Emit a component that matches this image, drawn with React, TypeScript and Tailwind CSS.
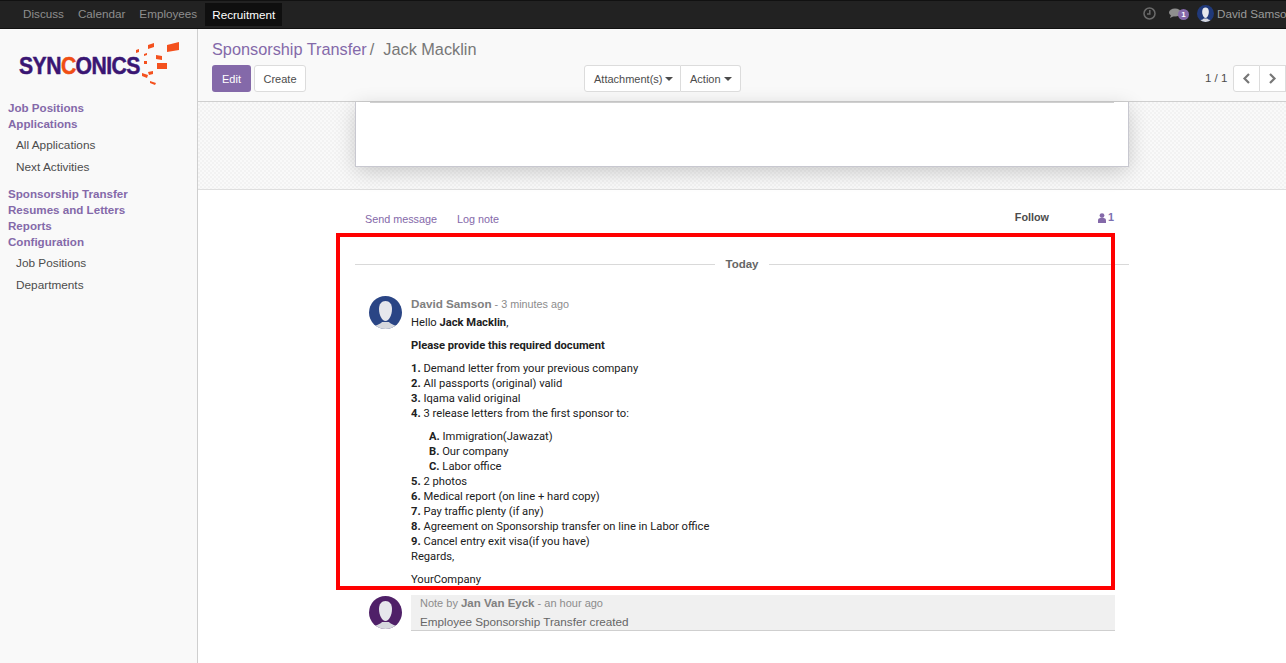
const SANS = "font-['Liberation_Sans',Arial,sans-serif]";
const BODY = "font-['Roboto','Noto_Sans',sans-serif]";

function Avatar({ color, size = 33 }: { color: string; size?: number }) {
  return (
    <svg width={size} height={size} viewBox="0 0 33 33" className="shrink-0">
      <defs>
        <clipPath id={`clip-${color}`}>
          <circle cx="16.5" cy="16.5" r="16.5" />
        </clipPath>
      </defs>
      <g clipPath={`url(#clip-${color})`}>
        <rect width="33" height="33" fill={color} />
        <path d="M3 33c1-4 8-4 10-7h7c2 3 9 3 10 7z" fill="#d6d8de" />
        <path d="M16.5 5c4 0 6.5 3 6.5 8 0 6-3 12-6.5 12S10 19 10 13c0-5 2.500-8 6.500-8z" fill="#e6e7ec" />
      </g>
    </svg>
  );
}

function Caret() {
  return <span className="ml-[3px] inline-block border-x-[4px] border-t-[4px] border-x-transparent border-t-[#4c4c4c] align-middle" />;
}

function Logo() {
  return (
    <div className="relative h-[60px] w-[197px]">
      <div className="absolute left-[19px] top-[23px] origin-left scale-x-[0.9] text-[23.5px] font-bold leading-[28px] tracking-[-0.6px] text-[#3a1673] [-webkit-text-stroke:0.5px_#3a1673] font-['Liberation_Sans',sans-serif]">
        SYN<span className="text-[#f04e14] [-webkit-text-stroke:0.5px_#f04e14]">C</span>ONICS
      </div>
      <svg className="absolute left-[135px] top-[12px]" width="46" height="46" viewBox="0 0 46 46" fill="#f4511e">
        <path d="M32 4l12-3v8l-12 2zM13 4l6-2v4l-6 2zM1 9l3-1v3l-3 1zM9 13l3-1v2l-3 1zM21 14l6 1v4l-6-1zM22 22h10v6h-10zM9 20h3v3h-3zM13 31l5-1 0 3-4 1zM7 32l6 2-1 3-5-2zM15 40l6 2-1 2-5-2z" />
      </svg>
    </div>
  );
}

const navItems = ["Discuss", "Calendar", "Employees"];

const docs = [
  "Demand letter from your previous company",
  "All passports (original) valid",
  "Iqama valid original",
  "3 release letters from the first sponsor to:",
];
const subDocs = [
  ["A.", "Immigration(Jawazat)"],
  ["B.", "Our company"],
  ["C.", "Labor office"],
];
const docs2 = [
  "2 photos",
  "Medical report (on line + hard copy)",
  "Pay traffic plenty (if any)",
  "Agreement on Sponsorship transfer on line in Labor office",
  "Cancel entry exit visa(if you have)",
];

function SideHead({ children }: { children: string }) {
  return <div className="h-4 pl-2 text-[11.6px] font-bold leading-4 text-[#8469a9]">{children}</div>;
}

function SideItem({ children }: { children: string }) {
  return <div className="h-[22px] pl-4 text-[11.8px] leading-[22px] text-[#4c4c4c]">{children}</div>;
}

export default function App() {
  return (
    <div className={`relative flex h-[663px] w-[1286px] flex-col overflow-hidden bg-white ${SANS}`}>
      {/* top bar */}
      <div className="flex h-[29px] shrink-0 items-center justify-between border-y border-y-[#111] bg-[#222222] pb-px text-[11.7px]">
        <div className="flex items-center pl-[16px]">
          {navItems.map((n) => (
            <span key={n} className="px-[7px] text-[#8e8e8e]">{n}</span>
          ))}
          <span className="ml-px h-[23px] bg-[#0f0f0f] px-[7px] leading-[23px] text-white">Recruitment</span>
        </div>
        <div className="flex w-[143px] shrink-0 items-center overflow-hidden whitespace-nowrap text-[#9a9a9a]">
          <svg width="13" height="13" viewBox="0 0 13 13" fill="none" stroke="#6b6b6b" strokeWidth="1.5" className="shrink-0">
            <circle cx="6.5" cy="6.5" r="5.5" />
            <path d="M6.8 3v4H4" />
          </svg>
          <span className="relative ml-[13px] h-3 w-5 shrink-0">
            <svg width="14" height="11" viewBox="0 0 14 11" fill="#8e8e8e" className="absolute left-0 top-0">
              <ellipse cx="6" cy="4.5" rx="6" ry="4" />
              <path d="M2 7l-1 3 4-2zM9 7h4l-1 3z" />
            </svg>
            <span className="absolute left-[9px] top-[1px] h-[11px] w-[11px] rounded-full bg-[#8469a9] text-center text-[8px] font-bold leading-[11px] text-white">1</span>
          </span>
          <span className="ml-[8px] shrink-0"><Avatar color="#20397a" size={17} /></span>
          <span className="ml-[3px] text-[11.7px]">David Samson</span>
        </div>
      </div>

      <div className="flex min-h-0 flex-1">
        {/* sidebar */}
        <div className="w-[198px] shrink-0 border-r border-r-[#cfcfcf] bg-[#f9f9f9]">
          <Logo />
          <div className="pt-[11px]">
            <SideHead>Job Positions</SideHead>
            <SideHead>Applications</SideHead>
            <div className="mt-[2px]">
              <SideItem>All Applications</SideItem>
              <SideItem>Next Activities</SideItem>
            </div>
            <div className="mt-[8px]">
              <SideHead>Sponsorship Transfer</SideHead>
              <SideHead>Resumes and Letters</SideHead>
              <SideHead>Reports</SideHead>
              <SideHead>Configuration</SideHead>
            </div>
            <div className="mt-[2px]">
              <SideItem>Job Positions</SideItem>
              <SideItem>Departments</SideItem>
            </div>
          </div>
        </div>

        <div className="min-w-0 flex-1">
          {/* control panel */}
          <div className="h-[73px] border-b border-b-[#cfcfcf] bg-[#f9f9f9] pl-[14px]">
            <div className="flex h-[36px] items-center pt-[3px] text-[16.3px] leading-5">
              <span className="text-[#8469a9]">Sponsorship Transfer</span>
              <span className="ml-[3px] text-[#777777]">/</span>
              <span className="ml-[9px] text-[#777777]">Jack Macklin</span>
            </div>
            <div className="flex items-center text-[11px]">
              <div className="flex h-[27px] w-[39px] items-center justify-center rounded-[3px] bg-[#8469a9] pt-px text-white">Edit</div>
              <div className="ml-[3px] flex h-[27px] w-[52px] items-center justify-center rounded-[3px] border border-[#dcdcdc] bg-white pt-px text-[#4c4c4c]">Create</div>
              <div className="ml-[278px] flex h-[27px] w-[97px] items-center rounded-l-[3px] border border-[#dcdcdc] bg-white pl-[9px] pt-px text-[#4c4c4c]">Attachment(s)<Caret /></div>
              <div className="flex h-[27px] w-[60px] items-center rounded-r-[3px] border border-l-0 border-[#dcdcdc] bg-white pl-[9px] pt-px text-[#4c4c4c]">Action<Caret /></div>
              <div className="ml-[464px] w-[28px] whitespace-nowrap pt-px text-[11.5px] text-[#4c4c4c]">1 / 1</div>
              <div className="flex h-[27px] w-[27px] items-center justify-center rounded-l-[3px] border border-[#dcdcdc] bg-white">
                <svg width="9" height="11" viewBox="0 0 9 11" fill="none" stroke="#777" strokeWidth="2.2"><path d="M7 1L2.500 5.500 7 10" /></svg>
              </div>
              <div className="flex h-[27px] w-[26px] items-center justify-center border-y border-r border-[#dcdcdc] bg-white">
                <svg width="9" height="11" viewBox="0 0 9 11" fill="none" stroke="#777" strokeWidth="2.2"><path d="M2 1l4.500 4.500L2 10" /></svg>
              </div>
            </div>
          </div>

          {/* form sheet area */}
          <div className="h-[88px] border-b border-b-[#dedede] bg-[#f6f6f6] bg-[conic-gradient(#f2f2f2_25%,#f9f9f9_0_50%,#f2f2f2_0_75%,#f9f9f9_0)] bg-[length:4px_4px] pl-[157px]">
            <div className="h-[65px] w-[774px] border border-t-0 border-[#c8c8d0] bg-white px-[14px] shadow-[0_5px_20px_-1px_rgba(0,0,0,0.2)]">
              <div className="h-px bg-[#cfcfcf]" />
            </div>
          </div>

          {/* chatter */}
          <div className="pl-[157px]">
            <div className="flex h-[44px] w-[774px] items-center pl-[10px] pt-[15px] text-[10.8px]">
              <span className="text-[#8469a9]">Send message</span>
              <span className="ml-[20px] text-[#8469a9]">Log note</span>
              <span className="ml-auto -translate-y-[2px] font-bold text-[#4c4c4c]">Follow</span>
              <span className="ml-[49px] mr-[15px] flex -translate-y-[2px] items-center font-bold text-[#7c6fb0]">
                <svg width="8" height="10" viewBox="0 0 8 10" fill="#8469a9" className="mr-[2px]">
                  <circle cx="4" cy="2.600" r="2.400" />
                  <path d="M0 10V7.400C0 5.800 1.400 5 2.400 5h3.200C6.600 5 8 5.800 8 7.400V10z" />
                </svg>
                1
              </span>
            </div>

            <div className="relative mt-[30px] flex h-px w-[774px] items-center justify-center bg-[#d9d9d9]">
              <span className="bg-white px-[10px] text-[11.5px] font-bold text-[#666666]">Today</span>
            </div>

            <div className="mt-[31px] flex w-[760px] pl-[14px]">
              <Avatar color="#2a4585" />
              <div className="ml-[9px] min-w-0 flex-1">
                <div className="text-[10.8px] leading-[15px] text-[#8c8c8c]">
                  <span className="text-[11.7px] font-bold text-[#808080]">David Samson</span> - 3 minutes ago
                </div>
                <div className={`mt-[3px] text-[11.2px] leading-[15px] text-[#212121] ${BODY}`}>
                  <p>Hello <b>Jack Macklin</b>,</p>
                  <p className="mt-2"><b>Please provide this required document</b></p>
                  <div className="mt-2">
                    {docs.map((d, i) => (
                      <div key={d}><b>{i + 1}.</b> {d}</div>
                    ))}
                  </div>
                  <div className="mt-2 pl-[18px]">
                    {subDocs.map(([k, v]) => (
                      <div key={k}><b>{k}</b> {v}</div>
                    ))}
                  </div>
                  {docs2.map((d, i) => (
                    <div key={d}><b>{i + 5}.</b> {d}</div>
                  ))}
                  <p>Regards,</p>
                  <p className="mt-2">YourCompany</p>
                </div>
              </div>
            </div>

            <div className="mt-[8px] flex w-[760px] pl-[14px]">
              <div className="pt-px"><Avatar color="#4f2068" /></div>
              <div className="ml-[9px] h-[36px] min-w-0 flex-1 border-b border-b-[#cfcfcf] bg-[#f0f0f0] pl-[9px] text-[11px] leading-[17px]">
                <div className="text-[#8c8c8c]">Note by <span className="text-[11.5px] font-bold text-[#808080]">Jan Van Eyck</span> - an hour ago</div>
                <div className="mt-[1px] text-[11.7px] text-[#666666]">Employee Sponsorship Transfer created</div>
              </div>
            </div>
          </div>
        </div>
      </div>

      {/* annotation frame */}
      <div className="pointer-events-none absolute left-[336px] top-[233px] h-[357px] w-[779px] border-4 border-[#ff0000]" />
    </div>
  );
}
